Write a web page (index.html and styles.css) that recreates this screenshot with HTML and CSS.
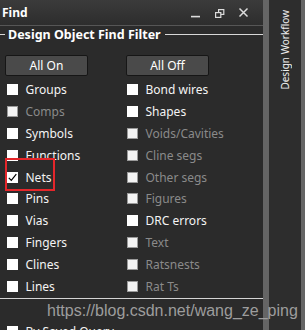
FILE: index.html
```html
<!DOCTYPE html>
<html>
<head>
<meta charset="utf-8">
<link rel="stylesheet" href="styles.css">
</head>
<body>
<div class="app">
  <div class="panel">
    <div class="title">
      <span class="name">Find</span>
      <svg class="controls" width="60" height="25" viewBox="0 0 60 25">
        <rect x="1" y="15.8" width="9" height="1.6" fill="#dcdcdc"/>
        <rect x="28.6" y="9.6" width="5.2" height="4.8" fill="none" stroke="#dcdcdc" stroke-width="1.2"/>
        <rect x="25.6" y="12.6" width="5.2" height="4.8" fill="#2f2f2f" stroke="#dcdcdc" stroke-width="1.2"/>
        <path d="M49.5 8.5 L57.5 16.5 M57.5 8.5 L49.5 16.5" stroke="#dcdcdc" stroke-width="1.5"/>
      </svg>
    </div>
    <div class="legend"><span>Design Object Find Filter</span></div>
    <div class="buttons">
      <div class="btn">All On</div>
      <div class="btn">All Off</div>
    </div>
    <div class="grid">
      <div class="item"><span class="box"></span>Groups</div>
      <div class="item"><span class="box"></span>Bond wires</div>
      <div class="item off"><span class="box"></span>Comps</div>
      <div class="item"><span class="box"></span>Shapes</div>
      <div class="item"><span class="box"></span>Symbols</div>
      <div class="item off"><span class="box"></span>Voids/Cavities</div>
      <div class="item"><span class="box"></span>Functions</div>
      <div class="item off"><span class="box"></span>Cline segs</div>
      <div class="item marked"><span class="box"><svg width="11" height="11" viewBox="0 0 11 11"><path d="M1.8 5.8 L4.3 8.4 L9.3 2.2" fill="none" stroke="#000" stroke-width="1.2"/></svg></span>Nets<span class="highlight"></span></div>
      <div class="item off"><span class="box"></span>Other segs</div>
      <div class="item"><span class="box"></span>Pins</div>
      <div class="item off"><span class="box"></span>Figures</div>
      <div class="item"><span class="box"></span>Vias</div>
      <div class="item"><span class="box"></span>DRC errors</div>
      <div class="item"><span class="box"></span>Fingers</div>
      <div class="item off"><span class="box"></span>Text</div>
      <div class="item"><span class="box"></span>Clines</div>
      <div class="item off"><span class="box"></span>Ratsnests</div>
      <div class="item"><span class="box"></span>Lines</div>
      <div class="item off"><span class="box"></span>Rat Ts</div>
    </div>
    <div class="rule"></div>
    <div class="saved item"><span class="box"></span>By Saved Query</div>
  </div>
  <div class="divider"></div>
  <div class="strip"><span class="vtext">Design Workflow</span></div>
  <div class="edge"></div>
  <div class="watermark">https://blog.csdn.net/wang_ze_ping</div>
</div>
</body>
</html>
```
FILE: styles.css
```css
html, body {
  margin: 0;
  padding: 0;
}
body {
  width: 305px;
  height: 330px;
  overflow: hidden;
  background: #2b2b2b;
  font-family: "Noto Sans", "DejaVu Sans", sans-serif;
  font-size: 12px;
  color: #f4f4f4;
}
.app {
  position: relative;
  display: flex;
  height: 330px;
}
.panel {
  width: 263px;
  flex: none;
  background: #2b2b2b;
}
.title {
  height: 25px;
  display: flex;
  align-items: center;
  padding-left: 2px;
  background: linear-gradient(#3b3b3b, #2d2d2d);
  border-bottom: 1px solid #565656;
}
.title .name {
  font-weight: bold;
  font-size: 12px;
  color: #ffffff;
}
.title .controls {
  margin-left: auto;
  margin-right: 13px;
  display: block;
}
.legend {
  height: 17px;
  display: flex;
  align-items: center;
  font-weight: bold;
  font-size: 12.5px;
  color: #ffffff;
}
.legend::before {
  content: "";
  width: 5px;
  height: 1px;
  background: #d8d8d8;
  margin-right: 3px;
}
.legend::after {
  content: "";
  flex: 1;
  height: 1px;
  background: #d8d8d8;
  margin-left: 4px;
}
.buttons {
  display: flex;
  gap: 38px;
  padding-left: 5px;
  margin-top: 12px;
}
.btn {
  width: 81px;
  height: 19px;
  border: 1px solid #161616;
  border-radius: 2px;
  background: #4a4a4a;
  display: flex;
  align-items: center;
  justify-content: center;
  color: #ffffff;
}
.grid {
  display: grid;
  grid-template-columns: 120px 1fr;
  grid-auto-rows: 21.9px;
  padding-left: 7px;
  margin-top: 2.5px;
}
.item {
  position: relative;
  display: flex;
  align-items: center;
  color: #f4f4f4;
}
.box {
  width: 11px;
  height: 11px;
  background: #ffffff;
  box-sizing: border-box;
  margin-right: 7.5px;
  flex: none;
  display: flex;
}
.item.off {
  color: #8a8a8a;
}
.item.off .box {
  border: 1px solid #9a9a9a;
  background: #f4f4f4;
}
.highlight {
  position: absolute;
  left: -2px;
  top: -8px;
  width: 46px;
  height: 29px;
  border: 2px solid #e5262b;
}
.rule {
  height: 1px;
  background: #d4d4d4;
  margin-top: 1px;
}
.saved {
  margin-top: 25px;
  padding-left: 7px;
  height: 14px;
}
.divider {
  width: 6px;
  flex: none;
  background: #656565;
}
.strip {
  width: 32px;
  flex: none;
  background: #2d2d2d;
  display: flex;
  justify-content: center;
  align-items: flex-start;
  padding-top: 10px;
  box-sizing: border-box;
}
.vtext {
  writing-mode: vertical-rl;
  transform: rotate(180deg);
  color: #eeeeee;
  font-size: 10px;
  line-height: 12px;
}
.edge {
  width: 4px;
  flex: none;
  background: #656565;
}
.watermark {
  position: absolute;
  left: 47px;
  top: 302.5px;
  font-family: "Liberation Sans", Arial, sans-serif;
  font-size: 16px;
  line-height: 16px;
  color: #9d9d9d;
  white-space: nowrap;
}
```
